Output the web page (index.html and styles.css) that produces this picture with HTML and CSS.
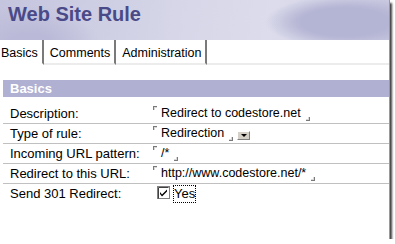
FILE: index.html
```html
<!DOCTYPE html>
<html lang="en">
<head>
  <meta charset="UTF-8" />
  <title>Web Site Rule</title>
  <link rel="stylesheet" href="styles.css">
</head>
<body>
  <div class="window">
    <div class="header">
      <h1>Web Site Rule</h1>
    </div>

    <div class="tabs">
      <div class="tab active first">Basics</div>
      <div class="tab">Comments</div>
      <div class="tab">Administration</div>
      <div class="tab-fill"></div>
    </div>

    <div class="section">
      <div class="section-title">Basics</div>
      <div class="rows">
        <div class="row">
          <div class="label">Description:</div>
          <div class="value">
            <span class="mark-open"></span>Redirect to codestore.net<span class="mark-close"></span>
          </div>
        </div>
        <div class="row">
          <div class="label">Type of rule:</div>
          <div class="value">
            <span class="mark-open"></span>Redirection<span class="mark-close"></span>
            <span class="drop-btn"><span class="arrow"></span></span>
          </div>
        </div>
        <div class="row">
          <div class="label">Incoming URL pattern:</div>
          <div class="value">
            <span class="mark-open"></span>/*<span class="mark-close"></span>
          </div>
        </div>
        <div class="row">
          <div class="label">Redirect to this URL:</div>
          <div class="value">
            <span class="mark-open"></span>http://www.codestore.net/*<span class="mark-close"></span>
          </div>
        </div>
        <div class="row last">
          <div class="label">Send 301 Redirect:</div>
          <div class="value check-value">
            <svg class="checkbox" width="13" height="13" viewBox="0 0 13 13">
              <rect x="0.5" y="0.5" width="12" height="12" fill="#fff" stroke="#808080"/>
              <path d="M1.5 12.5 V1.5 H11.5" fill="none" stroke="#404040"/>
              <path d="M3 6 L5 8.5 L10 3.5 L10 5.5 L5 10.5 L3 8 Z" fill="#000"/>
            </svg>
            <span class="focus-label">Yes</span>
          </div>
        </div>
      </div>
    </div>
  </div>
</body>
</html>
```

FILE: styles.css
```css
* {
  box-sizing: border-box;
}

body {
  margin: 0;
  background-color: #ffffff;
  font-family: "Liberation Sans", Arial, sans-serif;
  font-size: 13px;
  color: #000000;
}

.window {
  width: 390px;
  height: 239px;
  background-color: #ffffff;
  box-shadow: 2px 3px 2px rgba(0, 0, 0, 0.75);
  border-right: 1px solid #9a9a9a;
  overflow: hidden;
}

.header {
  height: 40px;
  padding: 2px 0 0 8px;
  background:
    radial-gradient(ellipse 80px 26px at 345px 22px, #b4b4d4 55%, transparent 100%),
    radial-gradient(ellipse 70px 40px at 30px 45px, #babad8 30%, transparent 100%),
    linear-gradient(100deg, #c4c4de 0%, #d6d6e8 45%, #dcdcec 70%, #c8c8e0 100%);
}

.header h1 {
  margin: 0;
  font-size: 20px;
  line-height: 24px;
  font-weight: bold;
  color: #4a4a88;
}

.tabs {
  display: flex;
  height: 25px;
  font-size: 12.5px;
}

.tab {
  height: 25px;
  padding: 2px 4px 0 6px;
  line-height: 22px;
  border-right: 2px solid #7a7a7a;
  border-bottom: 2px solid #ececec;
  white-space: nowrap;
}

.tab.first {
  padding-left: 1px;
  padding-right: 4px;
}

.tab.active {
  border-bottom-color: #ffffff;
}

.tab-fill {
  flex: 1;
  border-bottom: 2px solid #ececec;
}

.section {
  margin: 15px 0 0 3px;
}

.section-title {
  height: 17px;
  padding-left: 7px;
  background-color: #b0b0d2;
  color: #ffffff;
  font-weight: bold;
  line-height: 17px;
}

.rows {
  padding-top: 7px;
}

.row {
  display: flex;
  height: 20px;
  border-bottom: 1px solid #c0c0c0;
  line-height: 19px;
}

.row.last {
  border-bottom: 0;
}

.label {
  width: 150px;
  padding-left: 7px;
}

.value {
  display: flex;
  align-items: flex-start;
  font-size: 12.5px;
}

.mark-open {
  width: 4px;
  height: 4px;
  margin: 2px 4px 0 0;
  border-top: 1px solid #7a7a7a;
  border-left: 1px solid #7a7a7a;
  box-shadow: inset 1px 1px #d8d8d8;
}

.mark-close {
  width: 4px;
  height: 4px;
  margin: 13px 0 0 5px;
  border-bottom: 1px solid #7a7a7a;
  border-right: 1px solid #7a7a7a;
  box-shadow: inset -1px -1px #d8d8d8;
}

.drop-btn {
  display: flex;
  align-items: center;
  justify-content: center;
  width: 13px;
  height: 9px;
  margin: 7px 0 0 4px;
  background-color: #d4d0c8;
  border: 1px solid;
  border-color: #ffffff #808080 #808080 #ffffff;
}

.arrow {
  width: 0;
  height: 0;
  border-left: 3px solid transparent;
  border-right: 3px solid transparent;
  border-top: 3px solid #000000;
}

.check-value {
  padding-left: 4px;
  font-size: 13px;
}

.checkbox {
  margin: 2px 3px 0 0;
}

.focus-label {
  padding: 0 1px;
  outline: 1px dotted #000000;
  outline-offset: -1px;
  line-height: 18px;
  margin-top: 1px;
}
```
